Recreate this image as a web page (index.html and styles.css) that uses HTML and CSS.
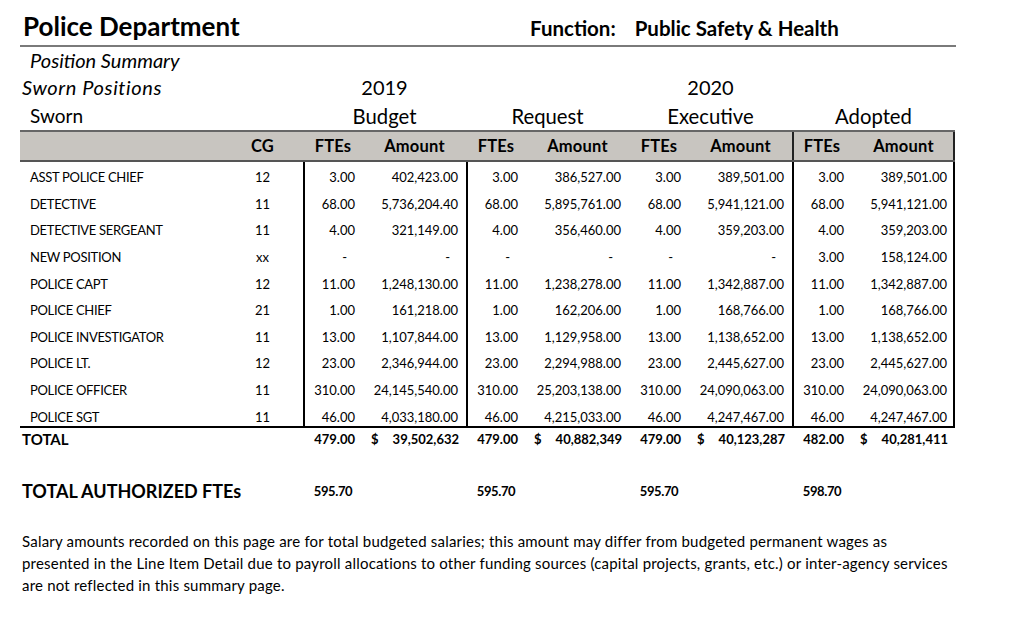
FILE: index.html
```html
<!DOCTYPE html>
<html lang="en">
<head>
<meta charset="utf-8">
<title>Police Department – Position Summary</title>
<link rel="stylesheet" href="styles.css">
</head>
<body>
<div class="page">
  <header class="title-bar">
    <h1 class="dept">Police Department</h1>
    <div class="function"><span class="fn-label">Function:</span><span class="fn-value">Public Safety &amp; Health</span></div>
  </header>
  <div class="subtitle">Position Summary</div>
  <table class="summary">
    <colgroup>
      <col class="c-name"><col class="c-cg">
      <col class="c-fte"><col class="c-amt">
      <col class="c-fte"><col class="c-amt">
      <col class="c-fte"><col class="c-amt">
      <col class="c-fte"><col class="c-amt">
    </colgroup>
    <thead>
      <tr class="year-row">
        <th colspan="2" class="group-title">Sworn Positions</th>
        <th colspan="2">2019</th>
        <th colspan="2"></th>
        <th colspan="2">2020</th>
        <th colspan="2"></th>
      </tr>
      <tr class="stage-row">
        <th colspan="2" class="sub-group">Sworn</th>
        <th colspan="2">Budget</th>
        <th colspan="2">Request</th>
        <th colspan="2">Executive</th>
        <th colspan="2">Adopted</th>
      </tr>
      <tr class="col-head">
        <th></th>
        <th>CG</th>
        <th>FTEs</th><th>Amount</th>
        <th>FTEs</th><th>Amount</th>
        <th>FTEs</th><th>Amount</th>
        <th class="sep">FTEs</th><th class="end">Amount</th>
      </tr>
    </thead>
    <tbody>
      <tr><td class="name">ASST POLICE CHIEF</td><td class="cg">12</td><td class="num sep">3.00</td><td class="num">402,423.00</td><td class="num sep">3.00</td><td class="num">386,527.00</td><td class="num">3.00</td><td class="num">389,501.00</td><td class="num sep">3.00</td><td class="num end">389,501.00</td></tr>
      <tr><td class="name">DETECTIVE</td><td class="cg">11</td><td class="num sep">68.00</td><td class="num">5,736,204.40</td><td class="num sep">68.00</td><td class="num">5,895,761.00</td><td class="num">68.00</td><td class="num">5,941,121.00</td><td class="num sep">68.00</td><td class="num end">5,941,121.00</td></tr>
      <tr><td class="name">DETECTIVE SERGEANT</td><td class="cg">11</td><td class="num sep">4.00</td><td class="num">321,149.00</td><td class="num sep">4.00</td><td class="num">356,460.00</td><td class="num">4.00</td><td class="num">359,203.00</td><td class="num sep">4.00</td><td class="num end">359,203.00</td></tr>
      <tr><td class="name">NEW POSITION</td><td class="cg">xx</td><td class="num sep dash">-</td><td class="num dash">-</td><td class="num sep dash">-</td><td class="num dash">-</td><td class="num dash">-</td><td class="num dash">-</td><td class="num sep">3.00</td><td class="num end">158,124.00</td></tr>
      <tr><td class="name">POLICE CAPT</td><td class="cg">12</td><td class="num sep">11.00</td><td class="num">1,248,130.00</td><td class="num sep">11.00</td><td class="num">1,238,278.00</td><td class="num">11.00</td><td class="num">1,342,887.00</td><td class="num sep">11.00</td><td class="num end">1,342,887.00</td></tr>
      <tr><td class="name">POLICE CHIEF</td><td class="cg">21</td><td class="num sep">1.00</td><td class="num">161,218.00</td><td class="num sep">1.00</td><td class="num">162,206.00</td><td class="num">1.00</td><td class="num">168,766.00</td><td class="num sep">1.00</td><td class="num end">168,766.00</td></tr>
      <tr><td class="name">POLICE INVESTIGATOR</td><td class="cg">11</td><td class="num sep">13.00</td><td class="num">1,107,844.00</td><td class="num sep">13.00</td><td class="num">1,129,958.00</td><td class="num">13.00</td><td class="num">1,138,652.00</td><td class="num sep">13.00</td><td class="num end">1,138,652.00</td></tr>
      <tr><td class="name">POLICE LT.</td><td class="cg">12</td><td class="num sep">23.00</td><td class="num">2,346,944.00</td><td class="num sep">23.00</td><td class="num">2,294,988.00</td><td class="num">23.00</td><td class="num">2,445,627.00</td><td class="num sep">23.00</td><td class="num end">2,445,627.00</td></tr>
      <tr><td class="name">POLICE OFFICER</td><td class="cg">11</td><td class="num sep">310.00</td><td class="num">24,145,540.00</td><td class="num sep">310.00</td><td class="num">25,203,138.00</td><td class="num">310.00</td><td class="num">24,090,063.00</td><td class="num sep">310.00</td><td class="num end">24,090,063.00</td></tr>
      <tr class="last"><td class="name">POLICE SGT</td><td class="cg">11</td><td class="num sep">46.00</td><td class="num">4,033,180.00</td><td class="num sep">46.00</td><td class="num">4,215,033.00</td><td class="num">46.00</td><td class="num">4,247,467.00</td><td class="num sep">46.00</td><td class="num end">4,247,467.00</td></tr>
    </tbody>
    <tfoot>
      <tr class="total">
        <td colspan="2" class="total-label">TOTAL</td>
        <td class="num">479.00</td><td class="money"><span>$</span><span>39,502,632</span></td>
        <td class="num">479.00</td><td class="money"><span>$</span><span>40,882,349</span></td>
        <td class="num">479.00</td><td class="money"><span>$</span><span>40,123,287</span></td>
        <td class="num">482.00</td><td class="money"><span>$</span><span>40,281,411</span></td>
      </tr>
      <tr class="authorized">
        <td colspan="2" class="auth-label">TOTAL AUTHORIZED FTEs</td>
        <td class="auth-val">595.70</td><td></td>
        <td class="auth-val">595.70</td><td></td>
        <td class="auth-val">595.70</td><td></td>
        <td class="auth-val">598.70</td><td></td>
      </tr>
    </tfoot>
  </table>
  <p class="note">Salary amounts recorded on this page are for total budgeted salaries; this amount may differ from budgeted permanent wages as<br>presented in the Line Item Detail due to payroll allocations to other funding sources (capital projects, grants, etc.) or inter-agency services<br>are not reflected in this summary page.</p>
</div>
</body>
</html>
```

FILE: styles.css
```css
* { box-sizing: border-box; }

html, body {
  margin: 0;
  padding: 0;
  background: #ffffff;
}

body {
  font-family: Lato, "Open Sans", sans-serif;
  color: #000000;
}

.page {
  width: 1014px;
  padding: 13px 0 0 20px;
}

.title-bar {
  width: 936px;
  display: flex;
  align-items: flex-end;
  border-bottom: 2px solid #7a7a7a;
  padding: 0 0 4px 3px;
  height: 34px;
}

.dept {
  margin: 0;
  font-size: 26px;
  font-weight: 700;
  line-height: 30px;
  width: 507px;
}

.function {
  font-size: 20.5px;
  font-weight: 700;
  line-height: 24px;
  display: flex;
  gap: 19px;
  padding-bottom: 1px;
}

.subtitle {
  font-style: italic;
  font-size: 20px;
  line-height: 26px;
  padding-left: 10px;
}

.summary {
  width: 935px;
  table-layout: fixed;
  border-collapse: separate;
  border-spacing: 0;
}

.c-name { width: 202px; }
.c-cg { width: 81px; }
.c-fte { width: 60px; }
.c-amt { width: 103px; }

.summary th,
.summary td {
  padding: 0;
}

.year-row th {
  font-size: 20px;
  font-weight: 400;
  height: 29px;
  line-height: 29px;
  text-align: center;
}

.year-row .group-title {
  font-style: italic;
  text-align: left;
  padding-left: 2px;
  letter-spacing: 0.6px;
}

.stage-row th {
  font-size: 20.3px;
  font-weight: 400;
  height: 28px;
  line-height: 28px;
  text-align: center;
}

.stage-row .sub-group {
  font-size: 19px;
  text-align: left;
  padding-left: 10px;
}

.col-head th {
  background: #c8c5c0;
  border-top: 2px solid #666666;
  border-bottom: 2px solid #555555;
  height: 32px;
  font-size: 16.5px;
  font-weight: 700;
  letter-spacing: 0.2px;
  text-align: center;
  vertical-align: middle;
}

.col-head th.sep { box-shadow: inset 2px 0 0 #222222; }
.col-head th.end { box-shadow: inset -2px 0 0 #222222; }

tbody td {
  height: 26.6px;
  font-size: 13px;
  vertical-align: middle;
  padding-top: 4px !important;
}

tbody td.sep { box-shadow: inset 2px 0 0 #000000; }
tbody td.end { box-shadow: inset -2px 0 0 #000000; }

tbody tr.last td { box-shadow: inset 0 -2px 0 #000000; }
tbody tr.last td.sep { box-shadow: inset 2px 0 0 #000000, inset 0 -2px 0 #000000; }
tbody tr.last td.end { box-shadow: inset -2px 0 0 #000000, inset 0 -2px 0 #000000; }

td.name {
  padding-left: 10px !important;
  letter-spacing: -0.3px;
}

td.cg { text-align: center; }

td.num {
  text-align: right;
  padding-right: 8px !important;
}

td.num.dash { padding-right: 16px !important; }

tr.total td {
  font-size: 13px;
  font-weight: 700;
  height: 21px;
  padding-top: 2px;
  vertical-align: middle;
}

td.total-label { font-size: 15px !important; padding-left: 2px !important; }

td.money {
  padding-left: 8px !important;
  padding-right: 7px !important;
}

td.money span:first-child { float: left; }
td.money span:last-child { float: right; }

tr.authorized td {
  height: 70px;
  padding-top: 30px;
  line-height: 24px;
  vertical-align: top;
  font-weight: 700;
}

td.auth-label {
  font-size: 18px;
  padding-left: 2px !important;
}

td.auth-val {
  font-size: 13px;
  text-align: center;
  letter-spacing: -0.4px;
}

.note {
  margin: 11px 0 0 2px;
  width: 940px;
  font-size: 15px;
  line-height: 22px;
  letter-spacing: 0.2px;
  white-space: nowrap;
}
```
